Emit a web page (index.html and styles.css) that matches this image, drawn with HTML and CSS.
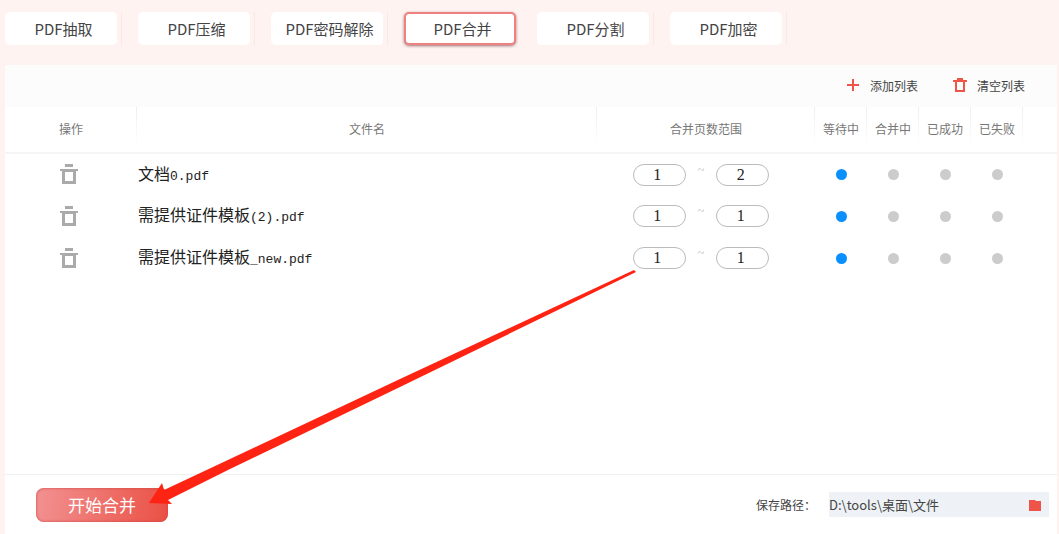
FILE: index.html
```
<!DOCTYPE html>
<html lang="zh-CN">
<head>
    <meta charset="UTF-8">
    <meta name="viewport" content="width=device-width, initial-scale=1.0">
    <title>PDF合并</title>
    <link rel="stylesheet" href="styles.css">
</head>
<body>
    <svg class="sprite" aria-hidden="true">
        <symbol id="trash" viewBox="0 0 18 21">
            <path d="M5 0h8v3H5zM0 5h18v2H0z"/>
            <path d="M2 7h14v13H2zM5 8v9h8V8z" fill-rule="evenodd"/>
        </symbol>
    </svg>

    <nav class="tabs">
        <div class="tab-item"><button class="tab">PDF抽取</button></div>
        <div class="tab-item"><button class="tab">PDF压缩</button></div>
        <div class="tab-item"><button class="tab">PDF密码解除</button></div>
        <div class="tab-item active"><button class="tab">PDF合并</button></div>
        <div class="tab-item"><button class="tab">PDF分割</button></div>
        <div class="tab-item"><button class="tab">PDF加密</button></div>
    </nav>

    <main class="panel">
        <div class="toolbar">
            <button class="tool-btn">
                <svg width="14" height="14" viewBox="0 0 14 14"><path d="M7 1v12M1 7h12" stroke="#ee5548" stroke-width="2"/></svg>
                <span>添加列表</span>
            </button>
            <button class="tool-btn">
                <svg width="14" height="14" viewBox="0 0 14 14" fill="none" stroke="#ee5548" stroke-width="2"><path d="M0 3h14M4 1h6M3 3v10h8V3"/></svg>
                <span>清空列表</span>
            </button>
        </div>

        <table class="file-table">
            <thead>
                <tr>
                    <th class="col-action">操作</th>
                    <th>文件名</th>
                    <th class="col-range">合并页数范围</th>
                    <th class="col-status">等待中</th>
                    <th class="col-status">合并中</th>
                    <th class="col-status">已成功</th>
                    <th class="col-status">已失败</th>
                    <th class="col-end"></th>
                </tr>
            </thead>
            <tbody>
                <tr>
                    <td><button class="remove-btn" aria-label="删除"><svg width="18" height="21"><use href="#trash"/></svg></button></td>
                    <td class="file-name">文档<span>0.pdf</span></td>
                    <td>
                        <div class="range">
                            <input type="text" value="1" aria-label="起始页">
                            <span>~</span>
                            <input type="text" value="2" aria-label="结束页">
                        </div>
                    </td>
                    <td><i class="dot on"></i></td>
                    <td><i class="dot"></i></td>
                    <td><i class="dot"></i></td>
                    <td><i class="dot"></i></td>
                    <td></td>
                </tr>
                <tr>
                    <td><button class="remove-btn" aria-label="删除"><svg width="18" height="21"><use href="#trash"/></svg></button></td>
                    <td class="file-name">需提供证件模板<span>(2).pdf</span></td>
                    <td>
                        <div class="range">
                            <input type="text" value="1" aria-label="起始页">
                            <span>~</span>
                            <input type="text" value="1" aria-label="结束页">
                        </div>
                    </td>
                    <td><i class="dot on"></i></td>
                    <td><i class="dot"></i></td>
                    <td><i class="dot"></i></td>
                    <td><i class="dot"></i></td>
                    <td></td>
                </tr>
                <tr>
                    <td><button class="remove-btn" aria-label="删除"><svg width="18" height="21"><use href="#trash"/></svg></button></td>
                    <td class="file-name">需提供证件模板<span>_new.pdf</span></td>
                    <td>
                        <div class="range">
                            <input type="text" value="1" aria-label="起始页">
                            <span>~</span>
                            <input type="text" value="1" aria-label="结束页">
                        </div>
                    </td>
                    <td><i class="dot on"></i></td>
                    <td><i class="dot"></i></td>
                    <td><i class="dot"></i></td>
                    <td><i class="dot"></i></td>
                    <td></td>
                </tr>
            </tbody>
        </table>

        <footer class="bottom-bar">
            <button class="start-btn">开始合并</button>
            <div class="save-path">
                <label for="savePath">保存路径：</label>
                <div class="path-box">
                    <input type="text" id="savePath" value="D:\tools\桌面\文件">
                    <button class="folder-btn" aria-label="选择文件夹">
                        <svg width="12" height="12" viewBox="0 0 12 12"><path d="M0 1h6l1 1h5v10H0z" fill="#ee5548"/></svg>
                    </button>
                </div>
            </div>
        </footer>

        <!-- 指向开始按钮的箭头 -->
        <svg class="arrow" width="488" height="236" viewBox="0 0 488 236">
            <path d="M0 234 13 214 15 221 81 190 251 110 485 1 487 3 251 118 81 200 19 231 23 235z" fill="#ff2313"/>
        </svg>
    </main>
</body>
</html>
```

FILE: styles.css
```
* {
    box-sizing: border-box;
}
body {
    display: flex;
    flex-direction: column;
    min-height: 100vh;
    margin: 0;
    padding: 12px 2px 0 5px;
    background: #fff3f2;
    color: #444;
    font-family: "Noto Sans CJK SC", sans-serif;
    font-size: 12px;
}
button, input {
    margin: 0;
    padding: 0;
    border: none;
    background: none;
    color: inherit;
    font: inherit;
}
button {
    cursor: pointer;
}
svg {
    display: block;
}
.sprite {
    display: none;
}

.tabs {
    display: flex;
    gap: 16px;
    margin-bottom: 20px;
}
.tab-item {
    padding-right: 5px;
    border-right: 1px solid #f8e9e8;
}
.tab-item.active {
    border-color: transparent;
}
.tab {
    width: 112px;
    height: 33px;
    padding-left: 5px;
    border-radius: 5px;
    background: #fff;
    font-size: 15px;
    line-height: 32px;
}
.tab-item {
    width: 117px;
}
.active .tab {
    border: 2px solid #ee8280;
    box-shadow: 0 1px 3px rgba(90, 30, 30, 0.6);
    line-height: 28px;
}

.panel {
    position: relative;
    display: flex;
    flex: 1;
    flex-direction: column;
    background: #fff;
}
.toolbar {
    display: flex;
    justify-content: flex-end;
    gap: 35px;
    height: 42px;
    padding: 0 32px 2px 0;
    background: #fcfcfc;
}
.tool-btn {
    display: flex;
    align-items: center;
    gap: 10px;
}

.file-table {
    width: 100%;
    border-collapse: collapse;
    table-layout: fixed;
}
.file-table th {
    height: 46px;
    padding: 0 0 2px;
    border-bottom: 2px solid #f5f5f5;
    background: linear-gradient(#eee, #fff) right top / 1px 40px no-repeat;
    color: #777;
    font-weight: normal;
}
.file-table th.col-end {
    background: none;
}
.file-table td {
    height: 42px;
    padding: 0;
}
.col-action {
    width: 132px;
}
.col-range {
    width: 218px;
}
.col-status {
    width: 52px;
}
.col-end {
    width: 34px;
}
.remove-btn {
    display: block;
    margin: 0 auto;
    padding-right: 4px;
    fill: #aaa;
}
.file-table .file-name {
    padding-left: 1px;
    color: #222;
    font-size: 16px;
    line-height: 24px;
}
.file-name span {
    font-family: "Liberation Mono", monospace;
    font-size: 13px;
}
.range {
    display: flex;
    justify-content: center;
    gap: 12px;
    padding-right: 10px;
}
.range input {
    width: 53px;
    height: 22px;
    padding-right: 4px;
    border: 1px solid #bbb;
    border-radius: 11px;
    color: #222;
    font-family: "Liberation Serif", serif;
    font-size: 16px;
    text-align: center;
}
.range span {
    color: #bbb;
    font-family: "Liberation Serif", serif;
    font-size: 12px;
    line-height: 12px;
}
.dot {
    display: block;
    width: 11px;
    height: 11px;
    margin: 0 auto;
    border-radius: 50%;
    background: #ccc;
}
.dot.on {
    background: #0a8fff;
}

.bottom-bar {
    display: flex;
    align-items: center;
    justify-content: space-between;
    height: 60px;
    margin-top: auto;
    padding: 0 8px 0 31px;
    border-top: 1px solid #edf1f1;
}
.start-btn {
    width: 132px;
    height: 34px;
    border-radius: 8px;
    background: linear-gradient(100deg, #f29292, #ea5044);
    box-shadow: inset 0 0 3px #cc4440;
    color: #fff;
    font-size: 17px;
    line-height: 32px;
}
.save-path {
    display: flex;
    align-items: center;
    gap: 13px;
}
.path-box {
    display: flex;
    width: 220px;
    height: 25px;
    padding-right: 8px;
    background: #eef2f6;
}
.path-box input {
    flex: 1;
    min-width: 0;
    font-size: 13px;
}

.arrow {
    position: absolute;
    left: 144px;
    bottom: 29px;
    pointer-events: none;
}
```
